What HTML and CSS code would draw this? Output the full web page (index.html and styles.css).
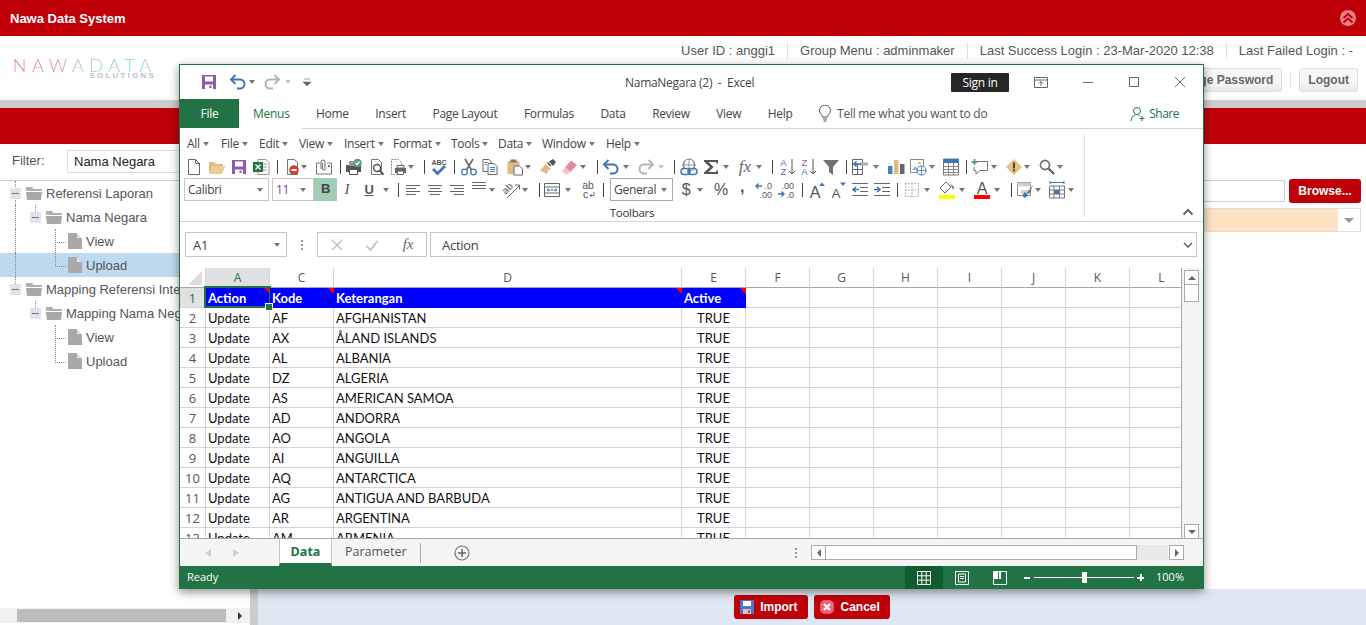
FILE: index.html
```html
<!DOCTYPE html>
<html lang="en">
<head>
  <meta charset="UTF-8" />
  <title>Nawa Data System</title>
  <link rel="stylesheet" href="styles.css">
</head>
<body>
  <!-- icon sprite for the spreadsheet ribbon -->
  <svg class="sprite" xmlns="http://www.w3.org/2000/svg">
    <symbol id="s-new" viewBox="0 0 18 18"><path d="M3.5 1.5h7l4 4v11h-11z" fill="#fff" stroke="#666"/><path d="M10.5 1.5v4h4" fill="none" stroke="#666"/></symbol>
    <symbol id="s-open" viewBox="0 0 18 18"><path d="M1 15V4h5l2 2h7v2H5l-3 7z" fill="#e2bb83"/><path d="M5 8h12.5L14 16H1.5z" fill="#eecb94"/></symbol>
    <symbol id="s-save" viewBox="0 0 18 18"><path d="M2 2h14v14H2z" fill="#8a5cad"/><path d="M5 3.5h8v5H5zM5 11.5h8V16H5z" fill="#fff"/><path d="M9.5 12.5h2V15h-2z" fill="#8a5cad"/></symbol>
    <symbol id="s-xls" viewBox="0 0 18 18"><path d="M6 1.5h8l3 3v12H6z" fill="#fff" stroke="#999"/><path d="M11 6h4M11 9h4M11 12h4" stroke="#999"/><path d="M1 4h10v10H1z" fill="#217346"/><path d="M3.5 6.5l5 5M8.5 6.5l-5 5" stroke="#fff" stroke-width="1.4"/></symbol>
    <symbol id="s-stop" viewBox="0 0 18 18"><path d="M3.5 1.5h7l3 3v12h-10z" fill="#fff" stroke="#777"/><circle cx="10" cy="12" r="4.8" fill="#c8442f"/><path d="M7.5 11h5v2h-5z" fill="#fff"/></symbol>
    <symbol id="s-clip" viewBox="0 0 18 18"><path d="M5 5H1.5v11h15V5H12" fill="none" stroke="#777"/><path d="M6 11V4a2 2 0 0 1 4 0v7a1.2 1.2 0 0 1-2.4 0V5" fill="none" stroke="#666"/><path d="M13 7h2v2h-2z" fill="#4a7ebb"/></symbol>
    <symbol id="s-printok" viewBox="0 0 18 18"><path d="M1 7h15v7H1z" fill="#555"/><path d="M4 3h7v5H4z" fill="#999"/><path d="M4.5 11.5h8v5h-8z" fill="#fff" stroke="#555"/><circle cx="12.5" cy="5" r="4.3" fill="#5a9f82"/><path d="M10.5 5l1.5 1.5 2.5-3" fill="none" stroke="#fff" stroke-width="1.2"/></symbol>
    <symbol id="s-preview" viewBox="0 0 18 18"><path d="M3.5 1.5h7l3 3v12h-10z" fill="#fff" stroke="#777"/><circle cx="9" cy="10" r="3.5" fill="#fff" stroke="#555" stroke-width="1.4"/><path d="M11.5 12.5l4 4" stroke="#555" stroke-width="2"/></symbol>
    <symbol id="s-printdoc" viewBox="0 0 18 18"><path d="M2.5 1.5h7l3 3v12h-10z" fill="#fff" stroke="#888" stroke-dasharray="2 1"/><path d="M6 10h11v5H6z" fill="#666"/><path d="M8 7.5h7V10H8z" fill="#fff" stroke="#666"/><path d="M8.5 13h6v3.5h-6z" fill="#fff" stroke="#666"/></symbol>
    <symbol id="s-cut" viewBox="0 0 18 18"><path d="M5 1l6.5 11M13 1L6.5 12" stroke="#666" stroke-width="1.6"/><circle cx="4.5" cy="14" r="2.8" fill="none" stroke="#3f76b4" stroke-width="1.3"/><circle cx="13.5" cy="14" r="2.8" fill="none" stroke="#3f76b4" stroke-width="1.3"/></symbol>
    <symbol id="s-copy" viewBox="0 0 18 18"><path d="M2 1.5h6l2 2v10H2z" fill="#fff" stroke="#666"/><path d="M7 5.5h6l3 3v8H7z" fill="#fff" stroke="#666"/><path d="M9 9.5h5M9 11.5h5M9 13.5h5M3.5 4.5h3M3.5 6.5h2" stroke="#4a7ebb"/></symbol>
    <symbol id="s-paste" viewBox="0 0 18 18"><path d="M1.5 3h12v13h-12z" fill="#e2bb83"/><path d="M4.5 1.5h6v3h-6z" fill="#777"/><path d="M8 8h5.5l3 3v6H8z" fill="#fff" stroke="#666"/></symbol>
    <symbol id="s-brush" viewBox="0 0 18 18"><path d="M1 12l6-6 5 5-3 1.5-1 3.5-3-1.5-2-1z" fill="#e2bb83"/><path d="M8 5l1-1 3.5 3.5-1 1z" fill="#444"/><path d="M10 3.5l4-2.5 3 3-3 4z" fill="#555"/></symbol>
    <symbol id="s-erase" viewBox="0 0 18 18"><path d="M10 2.5l6 4.5-6.5 7-5.5-4.5z" fill="#e58a9a"/><path d="M4 9.5L9.500 14l-2 2H4l-3-3z" fill="#f3c3cb"/></symbol>
    <symbol id="s-undo" viewBox="0 0 18 18"><path d="M6.5 2L2 6.5 6.5 11" fill="none" stroke="#3f76b4" stroke-width="2"/><path d="M2.5 6.5H11a4 4 0 0 1 0 9H8" fill="none" stroke="#3f76b4" stroke-width="2"/></symbol>
    <symbol id="s-redo" viewBox="0 0 18 18"><path d="M11.5 2L16 6.5 11.5 11" fill="none" stroke="#b5b5b5" stroke-width="2"/><path d="M15.5 6.5H7a4 4 0 0 0 0 9h3" fill="none" stroke="#b5b5b5" stroke-width="2"/></symbol>
    <symbol id="s-link" viewBox="0 0 18 18"><circle cx="9" cy="7" r="6" fill="none" stroke="#777"/><path d="M3 7h12M9 1v12M5 2.5c-1.5 3-1.5 6 0 9M13 2.5c1.5 3 1.5 6 0 9" fill="none" stroke="#777" stroke-width=".7"/><rect x="1" y="10.5" width="9" height="6" rx="3" fill="#fff" stroke="#3f76b4" stroke-width="1.5"/><rect x="8" y="10.5" width="9" height="6" rx="3" fill="none" stroke="#3f76b4" stroke-width="1.5"/></symbol>
    <symbol id="s-sigma" viewBox="0 0 18 18"><path d="M2 2h14v3.5h-1.5L14 4H6.500l5 5-5 5H14l.5-1.5H16V16H2v-1.500L8 9 2 3.500z" fill="#555"/></symbol>
    <symbol id="s-funnel" viewBox="0 0 18 18"><path d="M1 2h16l-6 7v8l-4-3V9z" fill="#707070"/></symbol>
    <symbol id="s-outline" viewBox="0 0 18 18"><path d="M1.5 1.5h10v15h-10zM1.5 6.5h10M1.5 11.5h10M6.500 6.5v10" fill="#fff" stroke="#666"/><path d="M9 4.500h8v3H9z" fill="#9ab3cf"/><path d="M10 6H3M5.500 3.500L3 6l2.500 2.500" fill="none" stroke="#3f76b4" stroke-width="1.6"/></symbol>
    <symbol id="s-bars" viewBox="0 0 18 18"><path d="M1 8h4.500v8H1z" fill="#4a7ebb"/><path d="M7 2h4.500v14H7z" fill="#e2bb83"/><path d="M13 6h4.500v10H13z" fill="#666"/></symbol>
    <symbol id="s-imgweb" viewBox="0 0 18 18"><path d="M1.5 1.5h13v13h-13z" fill="#fff" stroke="#888"/><circle cx="10.5" cy="5" r="1.5" fill="#e2bb83"/><path d="M3 12l3-4 3 4z" fill="#9ab3cf"/><circle cx="12.5" cy="12.5" r="4.5" fill="#fff" stroke="#3f76b4"/><path d="M8 12.5h9M12.5 8v9" stroke="#3f76b4" stroke-width=".8"/></symbol>
    <symbol id="s-table" viewBox="0 0 18 18"><path d="M1.5 1h15v16h-15z" fill="#fff" stroke="#777"/><path d="M1 1h16v4H1z" fill="#3f76b4"/><path d="M1.5 8.5h15M1.5 11.5h15M1.5 14.5h15M6.5 5v12M11.5 5v12" stroke="#888"/></symbol>
    <symbol id="s-comment" viewBox="0 0 18 18"><path d="M6 3.5h10.5v9H9L5 16v-3.500H3V9" fill="none" stroke="#777"/><path d="M3.5 1v6M.5 4h6" stroke="#5a9f82" stroke-width="1.8"/></symbol>
    <symbol id="s-warn" viewBox="0 0 18 18"><path d="M9 1l8 8-8 8-8-8z" fill="#e8c07f"/><path d="M8 4.5h2v6H8zM8 11.5h2v2H8z" fill="#444"/></symbol>
    <symbol id="s-search" viewBox="0 0 18 18"><circle cx="7" cy="7" r="4.5" fill="#fff" stroke="#777" stroke-width="1.8"/><path d="M10.5 10.5l5.5 5.5" stroke="#666" stroke-width="2.4"/></symbol>
    <symbol id="s-left" viewBox="0 0 18 18"><path d="M2 4.5h14M2 7.5h10M2 10.5h14M2 13.5h10" stroke="#666"/></symbol>
    <symbol id="s-center" viewBox="0 0 18 18"><path d="M2 4.5h14M4 7.5h10M2 10.5h14M4 13.5h10" stroke="#666"/></symbol>
    <symbol id="s-right" viewBox="0 0 18 18"><path d="M2 4.5h14M6 7.5h10M2 10.5h14M6 13.5h10" stroke="#666"/></symbol>
    <symbol id="s-top" viewBox="0 0 18 18"><path d="M2 1.5h14M2 4.5h14M2 7.5h14" stroke="#666"/></symbol>
    <symbol id="s-merge" viewBox="0 0 18 18"><path d="M1.5 2.5h15v13h-15zM1.5 6h15M1.5 12h15" fill="#fff" stroke="#666"/><path d="M4 9h10M5.5 7.5L4 9l1.5 1.5M12.5 7.5L14 9l-1.5 1.5" fill="none" stroke="#3f76b4"/></symbol>
    <symbol id="s-outd" viewBox="0 0 18 18"><path d="M1 2.5h16M9 6.5h8M9 10.5h8M1 14.5h16" stroke="#666"/><path d="M8 8.5H2M5 6L2 8.5 5 11" fill="none" stroke="#3f76b4" stroke-width="1.6"/></symbol>
    <symbol id="s-ind" viewBox="0 0 18 18"><path d="M1 2.5h16M9 6.5h8M9 10.5h8M1 14.5h16" stroke="#666"/><path d="M1 8.5h6M4 6l3 2.5L4 11" fill="none" stroke="#3f76b4" stroke-width="1.6"/></symbol>
    <symbol id="s-border" viewBox="0 0 18 18"><path d="M2.5 2.5h13v13h-13zM2.5 9h13M9 2.5v13" fill="none" stroke="#777" stroke-dasharray="1 2"/></symbol>
    <symbol id="s-fill" viewBox="0 0 18 18"><path d="M8 1L2 7l5 5 6-6z" fill="#fff" stroke="#666"/><path d="M12 3c2 1 4 2 4 4l-1 2-1-3z" fill="#3f76b4"/><path d="M1 14h16v4H1z" fill="#ffff00"/></symbol>
    <symbol id="s-fmt" viewBox="0 0 18 18"><path d="M1.5 1.5h13v13h-13z" fill="#fff" stroke="#888"/><path d="M1.5 1.5h13v4h-13z" fill="#d0d0d0"/><path d="M5 9h8v4H5z" fill="#c5d6e8"/><path d="M6 15l3-4 3 3-3 3z" fill="#3f76b4"/><path d="M11 12l6-8-4 9z" fill="#666"/></symbol>
    <symbol id="s-tblfmt" viewBox="0 0 18 18"><path d="M2 1.5h14M2 0v3M16 0v3" stroke="#3f76b4"/><path d="M1.5 5h15v12h-15zM1.5 9h15M1.5 13h15M6 5v12M11.5 5v12" fill="#fff" stroke="#777"/><path d="M6 9h5.5v4H6z" fill="#3f76b4"/></symbol>
    <symbol id="s-folder" viewBox="0 0 16 14"><path d="M0 1h6l1.5 2H16v2H0z" fill="#b0b0b0"/><path d="M0 6h16l-1 8H1z" fill="#a8a8a8"/></symbol>
    <symbol id="s-doc" viewBox="0 0 14 16"><path d="M0 0h8.5L14 5.500V16H0z" fill="#a9a9a9"/><path d="M9 .5V5h4.500z" fill="#e4e4e4"/></symbol>
  </svg>

  <header class="topbar">
    <span class="app-name">Nawa Data System</span>
    <span class="collapse-btn">
      <svg width="12" height="12" viewBox="0 0 12 12"><path d="M1.5 6L6 2l4.5 4M1.5 10.5L6 6.5l4.5 4" fill="none" stroke="#bf0008" stroke-width="2"/></svg>
    </span>
  </header>

  <div class="userbar">
    <div class="logo">
      <span class="logo-main">NAWADATA</span>
      <span class="logo-sub">SOLUTIONS</span>
    </div>
    <div class="user-side">
      <ul class="user-info">
        <li>User ID : anggi1</li>
        <li>Group Menu : adminmaker</li>
        <li>Last Success Login : 23-Mar-2020 12:38</li>
        <li>Last Failed Login : -</li>
      </ul>
      <div class="user-actions">
        <button class="grey-btn">Change Password</button>
        <span class="action-sep"></span>
        <button class="grey-btn logout">Logout</button>
      </div>
    </div>
  </div>
  <div class="grey-strip"></div>
  <div class="red-strip"></div>

  <main class="layout">
    <aside class="sidebar">
      <div class="filter">
        <label>Filter:</label>
        <input class="filter-input" type="text" value="Nama Negara">
      </div>
      <div class="tree">
        <div class="node trunk"><span class="tog"></span><svg class="folder"><use href="#s-folder"/></svg>Referensi Laporan</div>
        <div class="node trunk l2"><span class="tog"></span><svg class="folder"><use href="#s-folder"/></svg>Nama Negara</div>
        <div class="node trunk l3"><svg class="doc"><use href="#s-doc"/></svg>View</div>
        <div class="node trunk l3 last sel"><svg class="doc"><use href="#s-doc"/></svg>Upload</div>
        <div class="node trunk half"><span class="tog"></span><svg class="folder"><use href="#s-folder"/></svg>Mapping Referensi Internal</div>
        <div class="node l2"><span class="tog"></span><svg class="folder"><use href="#s-folder"/></svg>Mapping Nama Negara</div>
        <div class="node l3"><svg class="doc"><use href="#s-doc"/></svg>View</div>
        <div class="node l3 last"><svg class="doc"><use href="#s-doc"/></svg>Upload</div>
      </div>
      <div class="side-scroll">
        <i class="side-thumb"></i>
        <i class="side-arrow"></i>
      </div>
    </aside>
    <div class="splitter"></div>
    <section class="content">
      <div class="form-area">
        <div class="form-row">
          <input class="file-input" type="text">
          <button class="browse-btn">Browse...</button>
        </div>
        <div class="form-row">
          <div class="select-box"><span class="select-value"></span><span class="select-arrow"><i></i></span></div>
        </div>
      </div>
      <div class="footer-bar">
        <button class="red-btn">
          <svg width="16" height="16" viewBox="0 0 16 16"><path d="M1 1h14v14H1z" fill="#4a78c8"/><path d="M4 2h8v5H4z" fill="#fff"/><path d="M4 10h8v5H4z" fill="#f7b7c0"/><path d="M9 11h2v3H9z" fill="#4a78c8"/></svg>
          Import
        </button>
        <button class="red-btn">
          <svg width="16" height="16" viewBox="0 0 16 16"><rect x="1" y="1" width="14" height="14" rx="5" fill="#f1606f"/><path d="M5 5l6 6M11 5l-6 6" stroke="#fff" stroke-width="2.4"/></svg>
          Cancel
        </button>
      </div>
    </section>
  </main>

  <!-- spreadsheet window on top of the page -->
  <div class="xl-window">
    <div class="xl-title">
      <svg class="ic"><use href="#s-save"/></svg>
      <svg class="ic"><use href="#s-undo"/></svg>
      <i class="car"></i>
      <svg class="ic"><use href="#s-redo"/></svg>
      <i class="car pale"></i>
      <svg class="qat" width="8" height="9" viewBox="0 0 8 9"><path d="M1 1h6M0 4h8L4 8z" fill="#666" stroke="#666" stroke-width=".6"/></svg>
      <span class="doc-title">NamaNegara (2)  -  Excel</span>
      <span class="signin">Sign in</span>
      <svg class="ic"><path d="M2.5 4.5h13v10h-13zM2.5 7h13" fill="none" stroke="#666"/><path d="M9 13V8.500M7 10.500l2-2 2 2" fill="none" stroke="#666"/></svg>
      <svg class="ic"><path d="M4 9.5h10" stroke="#666"/></svg>
      <svg class="ic"><path d="M4.5 4.5h9v9h-9z" fill="none" stroke="#666"/></svg>
      <svg class="ic"><path d="M4 4l10 10M14 4L4 14" stroke="#777"/></svg>
    </div>

    <nav class="xl-tabs">
      <span class="tab-file">File</span>
      <span class="tab-menus">Menus</span>
      <div class="tabs-rest">
        <span>Home</span>
        <span>Insert</span>
        <span>Page Layout</span>
        <span>Formulas</span>
        <span>Data</span>
        <span>Review</span>
        <span>View</span>
        <span>Help</span>
        <span class="tell-me">
          <svg width="14" height="18" viewBox="0 0 14 18"><path d="M4.5 12c0-2-3-3.500-3-6.500a5.500 5.500 0 0 1 11 0c0 3-3 4.500-3 6.500zM5 14h4M5.500 16h3" fill="none" stroke="#555"/></svg>
          Tell me what you want to do
        </span>
        <span class="share">
          <svg width="16" height="16" viewBox="0 0 16 16"><circle cx="7" cy="5" r="3.5" fill="none" stroke="#217346"/><path d="M1 15c0-3 2-5 4-6M8.5 9.5c.5 0 1 .2 1.500.5M12 10v5M9.500 12.500h5" fill="none" stroke="#217346"/></svg>
          Share
        </span>
      </div>
    </nav>

    <div class="xl-ribbon">
      <div class="ribbon-main">
        <div class="menu-row">
          <span>All<i class="car"></i></span>
          <span>File<i class="car"></i></span>
          <span>Edit<i class="car"></i></span>
          <span>View<i class="car"></i></span>
          <span>Insert<i class="car"></i></span>
          <span>Format<i class="car"></i></span>
          <span>Tools<i class="car"></i></span>
          <span>Data<i class="car"></i></span>
          <span>Window<i class="car"></i></span>
          <span>Help<i class="car"></i></span>
        </div>
        <div class="icon-row">
          <svg class="ic"><use href="#s-new"/></svg>
          <svg class="ic"><use href="#s-open"/></svg>
          <svg class="ic"><use href="#s-save"/></svg>
          <svg class="ic"><use href="#s-xls"/></svg>
          <i class="sep"></i>
          <svg class="ic"><use href="#s-stop"/></svg>
          <i class="car"></i>
          <svg class="ic"><use href="#s-clip"/></svg>
          <i class="sep"></i>
          <svg class="ic"><use href="#s-printok"/></svg>
          <svg class="ic"><use href="#s-preview"/></svg>
          <svg class="ic"><use href="#s-printdoc"/></svg>
          <i class="car"></i>
          <i class="sep"></i>
          <svg class="ic" viewBox="0 0 18 18"><text x="9" y="6.5" font-size="7" font-weight="700" text-anchor="middle" font-family="Liberation Sans" fill="#555">ABC</text><path d="M3 11l4.5 4.5L15 8" fill="none" stroke="#3f76b4" stroke-width="2.8"/></svg>
          <i class="sep"></i>
          <svg class="ic"><use href="#s-cut"/></svg>
          <svg class="ic"><use href="#s-copy"/></svg>
          <svg class="ic"><use href="#s-paste"/></svg>
          <i class="car"></i>
          <svg class="ic"><use href="#s-brush"/></svg>
          <svg class="ic"><use href="#s-erase"/></svg>
          <i class="car"></i>
          <i class="sep"></i>
          <svg class="ic"><use href="#s-undo"/></svg>
          <i class="car"></i>
          <svg class="ic"><use href="#s-redo"/></svg>
          <i class="car pale"></i>
          <i class="sep"></i>
          <svg class="ic"><use href="#s-link"/></svg>
          <svg class="ic"><use href="#s-sigma"/></svg>
          <i class="car"></i>
          <svg class="ic" viewBox="0 0 18 18"><text x="9" y="14" font-size="17" font-style="italic" text-anchor="middle" font-family="Liberation Serif" fill="#666">fx</text></svg>
          <i class="car"></i>
          <i class="sep"></i>
          <svg class="ic" viewBox="0 0 18 18"><text x="5.5" y="8" font-size="9.5" text-anchor="middle" font-family="Liberation Sans" fill="#4a7ebb">A</text><text x="5.5" y="17" font-size="9.5" text-anchor="middle" font-family="Liberation Sans" fill="#8a5cad">Z</text><path d="M14 1v15M11 13l3 3 3-3" fill="none" stroke="#555"/></svg>
          <svg class="ic" viewBox="0 0 18 18"><text x="5.5" y="8" font-size="9.5" text-anchor="middle" font-family="Liberation Sans" fill="#8a5cad">Z</text><text x="5.5" y="17" font-size="9.5" text-anchor="middle" font-family="Liberation Sans" fill="#4a7ebb">A</text><path d="M14 1v15M11 13l3 3 3-3" fill="none" stroke="#555"/></svg>
          <svg class="ic"><use href="#s-funnel"/></svg>
          <i class="sep"></i>
          <svg class="ic"><use href="#s-outline"/></svg>
          <i class="car"></i>
          <svg class="ic"><use href="#s-bars"/></svg>
          <svg class="ic"><use href="#s-imgweb"/></svg>
          <i class="car"></i>
          <svg class="ic"><use href="#s-table"/></svg>
          <i class="sep"></i>
          <svg class="ic"><use href="#s-comment"/></svg>
          <i class="car"></i>
          <svg class="ic"><use href="#s-warn"/></svg>
          <i class="car"></i>
          <svg class="ic"><use href="#s-search"/></svg>
          <i class="car"></i>
        </div>
        <div class="format-row">
          <span class="combo font-combo">Calibri<i class="car"></i></span>
          <span class="combo size-combo">11<i class="car"></i></span>
          <span class="bold-btn">B</span>
          <span class="gl italic">I</span>
          <span class="gl under">U</span>
          <i class="car"></i>
          <i class="sep"></i>
          <svg class="ic"><use href="#s-left"/></svg>
          <svg class="ic"><use href="#s-center"/></svg>
          <svg class="ic"><use href="#s-right"/></svg>
          <svg class="ic"><use href="#s-top"/></svg>
          <i class="car"></i>
          <svg class="ic" viewBox="0 0 18 18"><text x="6" y="10" font-size="10" transform="rotate(-45 6 9)" text-anchor="middle" font-family="Liberation Sans" fill="#555">ab</text><path d="M4 17L16 5M12 4h4.5v4.5" fill="none" stroke="#666"/></svg>
          <i class="car"></i>
          <i class="sep"></i>
          <svg class="ic"><use href="#s-merge"/></svg>
          <i class="car"></i>
          <svg class="ic" viewBox="0 0 18 18"><text x="9" y="8" font-size="10.5" text-anchor="middle" font-family="Liberation Sans" fill="#555">ab</text><text x="4" y="17" font-size="10.5" font-family="Liberation Sans" fill="#555">c</text><path d="M15 11v3.5h-4M12.5 13L11 14.5l1.5 1.5" fill="none" stroke="#3f76b4"/></svg>
          <i class="sep"></i>
          <span class="combo general-combo">General<i class="car"></i></span>
          <span class="gl big">$</span>
          <i class="car"></i>
          <span class="gl big">%</span>
          <span class="gl big comma">,</span>
          <svg class="ic" viewBox="0 0 18 18"><text x="18" y="8" font-size="9" text-anchor="end" font-family="Liberation Sans" fill="#555">.0</text><text x="18" y="17" font-size="9" text-anchor="end" font-family="Liberation Sans" fill="#555">.00</text><path d="M8 5H2M4.5 2.5L2 5l2.5 2.500" fill="none" stroke="#3f76b4" stroke-width="1.4"/></svg>
          <svg class="ic" viewBox="0 0 18 18"><text x="18" y="8" font-size="9" text-anchor="end" font-family="Liberation Sans" fill="#555">.00</text><text x="18" y="17" font-size="9" text-anchor="end" font-family="Liberation Sans" fill="#555">.0</text><path d="M2 13h6M5.5 10.5L8 13l-2.500 2.500" fill="none" stroke="#3f76b4" stroke-width="1.4"/></svg>
          <i class="sep"></i>
          <svg class="ic" viewBox="0 0 18 18"><text x="7" y="17" font-size="16" text-anchor="middle" font-family="Liberation Sans" fill="#555">A</text><path d="M11 5l3-3.5L17 5z" fill="#3f76b4"/></svg>
          <svg class="ic" viewBox="0 0 18 18"><text x="7" y="17" font-size="13" text-anchor="middle" font-family="Liberation Sans" fill="#555">A</text><path d="M11 1.5h6L14 5z" fill="#3f76b4"/></svg>
          <svg class="ic"><use href="#s-outd"/></svg>
          <svg class="ic"><use href="#s-ind"/></svg>
          <i class="sep"></i>
          <svg class="ic"><use href="#s-border"/></svg>
          <i class="car"></i>
          <svg class="ic"><use href="#s-fill"/></svg>
          <i class="car"></i>
          <svg class="ic" viewBox="0 0 18 18"><text x="9" y="13" font-size="16" text-anchor="middle" font-family="Liberation Sans" fill="#555">A</text><path d="M1 14h16v4H1z" fill="#ff0000"/></svg>
          <i class="car"></i>
          <i class="sep"></i>
          <svg class="ic"><use href="#s-fmt"/></svg>
          <i class="car"></i>
          <svg class="ic"><use href="#s-tblfmt"/></svg>
          <i class="car"></i>
        </div>
        <div class="ribbon-label">Toolbars</div>
      </div>
      <div class="ribbon-end">
        <svg width="12" height="8" viewBox="0 0 12 8"><path d="M1.5 6.500L6 2l4.500 4.500" fill="none" stroke="#666" stroke-width="2"/></svg>
      </div>
    </div>

    <div class="xl-formula">
      <div class="name-box">A1<i class="car"></i></div>
      <span class="dots"></span>
      <div class="fx-box">
        <svg width="14" height="14" viewBox="0 0 14 14"><path d="M2 2l10 10M12 2L2 12" stroke="#c4c4c4" stroke-width="1.5"/></svg>
        <svg width="14" height="14" viewBox="0 0 14 14"><path d="M1.5 8l4 4 7-9" fill="none" stroke="#c4c4c4" stroke-width="2"/></svg>
        <svg width="16" height="16" viewBox="0 0 18 18"><text x="9" y="14" font-size="17" font-style="italic" text-anchor="middle" font-family="Liberation Serif" fill="#666">fx</text></svg>
      </div>
      <div class="formula-input">Action
        <svg width="10" height="6" viewBox="0 0 10 6"><path d="M1 1l4 4 4-4" fill="none" stroke="#555" stroke-width="1.3"/></svg>
      </div>
    </div>

    <div class="xl-sheet">
      <div class="grid-wrap">
        <table class="grid">
          <colgroup><col class="c-row"><col class="c-64"><col class="c-64"><col class="c-d"><col class="c-64"><col class="c-64"><col class="c-64"><col class="c-64"><col class="c-64"><col class="c-64"><col class="c-64"><col class="c-64"></colgroup>
          <tr class="head"><th class="corner"></th><th class="picked">A</th><th>C</th><th>D</th><th>E</th><th>F</th><th>G</th><th>H</th><th>I</th><th>J</th><th>K</th><th>L</th></tr>
          <tr class="title-row"><th class="picked">1</th><td class="current"><b>Action</b><i class="handle"></i></td><td class="note"><b>Kode</b></td><td class="note"><b>Keterangan</b></td><td class="note"><b>Active</b></td><td class="plain"></td><td class="plain"></td><td class="plain"></td><td class="plain"></td><td class="plain"></td><td class="plain"></td><td class="plain"></td></tr>
          <tr><th>2</th><td>Update</td><td>AF</td><td>AFGHANISTAN</td><td class="mid">TRUE</td><td></td><td></td><td></td><td></td><td></td><td></td><td></td></tr>
          <tr><th>3</th><td>Update</td><td>AX</td><td>ÅLAND ISLANDS</td><td class="mid">TRUE</td><td></td><td></td><td></td><td></td><td></td><td></td><td></td></tr>
          <tr><th>4</th><td>Update</td><td>AL</td><td>ALBANIA</td><td class="mid">TRUE</td><td></td><td></td><td></td><td></td><td></td><td></td><td></td></tr>
          <tr><th>5</th><td>Update</td><td>DZ</td><td>ALGERIA</td><td class="mid">TRUE</td><td></td><td></td><td></td><td></td><td></td><td></td><td></td></tr>
          <tr><th>6</th><td>Update</td><td>AS</td><td>AMERICAN SAMOA</td><td class="mid">TRUE</td><td></td><td></td><td></td><td></td><td></td><td></td><td></td></tr>
          <tr><th>7</th><td>Update</td><td>AD</td><td>ANDORRA</td><td class="mid">TRUE</td><td></td><td></td><td></td><td></td><td></td><td></td><td></td></tr>
          <tr><th>8</th><td>Update</td><td>AO</td><td>ANGOLA</td><td class="mid">TRUE</td><td></td><td></td><td></td><td></td><td></td><td></td><td></td></tr>
          <tr><th>9</th><td>Update</td><td>AI</td><td>ANGUILLA</td><td class="mid">TRUE</td><td></td><td></td><td></td><td></td><td></td><td></td><td></td></tr>
          <tr><th>10</th><td>Update</td><td>AQ</td><td>ANTARCTICA</td><td class="mid">TRUE</td><td></td><td></td><td></td><td></td><td></td><td></td><td></td></tr>
          <tr><th>11</th><td>Update</td><td>AG</td><td>ANTIGUA AND BARBUDA</td><td class="mid">TRUE</td><td></td><td></td><td></td><td></td><td></td><td></td><td></td></tr>
          <tr><th>12</th><td>Update</td><td>AR</td><td>ARGENTINA</td><td class="mid">TRUE</td><td></td><td></td><td></td><td></td><td></td><td></td><td></td></tr>
          <tr><th>13</th><td>Update</td><td>AM</td><td>ARMENIA</td><td class="mid">TRUE</td><td></td><td></td><td></td><td></td><td></td><td></td><td></td></tr>
        </table>
      </div>
      <div class="v-scroll">
        <span class="sb-btn"><i class="tri-up"></i></span>
        <span class="v-thumb"></span>
        <span class="sb-btn sb-down"><i class="tri-down"></i></span>
      </div>
    </div>

    <div class="xl-sheetbar">
      <i class="nav-left"></i>
      <i class="nav-right"></i>
      <span class="sheet-tab active">Data</span>
      <span class="sheet-tab">Parameter</span>
      <i class="tab-sep"></i>
      <svg class="add-sheet" width="16" height="16" viewBox="0 0 16 16"><circle cx="8" cy="8" r="7" fill="none" stroke="#777" stroke-width="1.2"/><path d="M8 4v8M4 8h8" stroke="#666" stroke-width="1.5"/></svg>
      <span class="dots bar-dots"></span>
      <div class="h-scroll">
        <span class="sb-btn"><i class="tri-left"></i></span>
        <span class="h-thumb"></span>
        <span class="h-track"></span>
        <span class="sb-btn"><i class="tri-right"></i></span>
      </div>
    </div>

    <footer class="xl-status">
      <span class="status-text">Ready</span>
      <div class="view-btns">
        <span class="view-btn on"><svg width="14" height="14" viewBox="0 0 14 14"><path d="M.5 .5h13v13H.5zM.5 4.800h13M.5 9.200h13M4.800 .5v13M9.200 .5v13" fill="none" stroke="#fff"/></svg></span>
        <span class="view-btn"><svg width="14" height="14" viewBox="0 0 14 14"><path d="M.5 .5h13v13H.5z" fill="none" stroke="#fff"/><path d="M3.5 3h7v8h-7zM5 5.500h4M5 7.500h4" fill="none" stroke="#fff"/></svg></span>
        <span class="view-btn"><svg width="14" height="14" viewBox="0 0 14 14"><path d="M.5 .5h13v13H.5z" fill="none" stroke="#fff"/><path d="M1 1h4v7H1zM6 1h2v7H6z" fill="#fff"/></svg></span>
      </div>
      <i class="zoom-minus"></i>
      <div class="zoom-track"><i class="zoom-thumb"></i></div>
      <i class="zoom-plus"></i>
      <span class="zoom-val status-text">100%</span>
    </footer>
  </div>
</body>
</html>
```

FILE: styles.css
```css
* { box-sizing: border-box; }
html, body { height: 100%; }
body {
  margin: 0;
  height: 625px;
  overflow: hidden;
  display: flex;
  flex-direction: column;
  font-family: "Liberation Sans", Arial, sans-serif;
  font-size: 13px;
  color: #555;
  background: #fff;
}
i { display: block; }
.sprite { position: absolute; width: 0; height: 0; }

/* page chrome */
.topbar {
  height: 36px;
  flex: none;
  background: #bf0008;
  color: #fff;
  display: flex;
  align-items: center;
  justify-content: space-between;
  padding: 0 10px;
}
.app-name { font-size: 13px; font-weight: bold; }
.collapse-btn {
  width: 16px;
  height: 16px;
  border-radius: 50%;
  background: #e58086;
  display: flex;
  align-items: center;
  justify-content: center;
}
.userbar {
  height: 64px;
  flex: none;
  display: flex;
  justify-content: space-between;
}
.logo {
  display: flex;
  flex-direction: column;
  align-items: flex-end;
  padding: 22px 0 0 13px;
  width: 154px;
}
.logo-main {
  font-family: Lato, sans-serif;
  font-weight: 300;
  font-size: 18px;
  line-height: 14px;
  letter-spacing: 5.6px;
  margin-right: -2.6px;
  white-space: nowrap;
  background: linear-gradient(90deg, #e8808f 0%, #e8808f 30%, #9ad8a4 52%, #7fc8dc 68%, #8ed4e0 100%);
  -webkit-background-clip: text;
  background-clip: text;
  color: transparent;
}
.logo-sub {
  font-size: 8px;
  line-height: 8px;
  font-weight: bold;
  letter-spacing: 2.2px;
  color: #b9bfc2;
  margin-right: -2px;
}
.user-side {
  display: flex;
  flex-direction: column;
  align-items: flex-end;
  padding-right: 8px;
}
.user-info {
  list-style: none;
  margin: 0;
  padding: 0 5px 2px 0;
  display: flex;
  height: 32px;
  align-items: center;
}
.user-info li {
  padding: 0 12px;
  line-height: 16px;
  border-left: 1px solid #ddd;
}
.user-info li:first-child { border-left: 0; }
.user-info li:last-child { padding-right: 0; }
.user-actions {
  display: flex;
  align-items: center;
  height: 24px;
}
.grey-btn {
  height: 24px;
  padding: 0 8px;
  font: bold 12px "Liberation Sans", Arial, sans-serif;
  color: #666;
  border: 1px solid #ddd;
  border-radius: 3px;
  background: linear-gradient(#f7f7f7, #f7f7f7 60%, #e8e8e8);
}
.action-sep {
  width: 1px;
  height: 14px;
  margin: 0 8px;
  background: #ddd;
}
.grey-strip { height: 8px; flex: none; background: #ccc; }
.red-strip { height: 36px; flex: none; background: #bf0008; }

.layout { flex: 1; display: flex; min-height: 0; }
.sidebar {
  width: 250px;
  flex: none;
  display: flex;
  flex-direction: column;
  overflow: hidden;
}
.filter {
  height: 37px;
  flex: none;
  display: flex;
  align-items: flex-start;
  padding: 6px 0 0 12px;
  border-bottom: 1px solid #ccc;
}
.filter label { width: 55px; line-height: 22px; }
.filter-input {
  width: 170px;
  height: 23px;
  padding: 0 6px;
  border: 1px solid #ddd;
  font: 13px "Liberation Sans", Arial, sans-serif;
  color: #222;
}
.tree { flex: 1; }
.node {
  position: relative;
  height: 24px;
  display: flex;
  align-items: center;
  padding-left: 10px;
  white-space: nowrap;
}
.node.sel { background: #bddaf0; }
.node.l2 { padding-left: 30px; }
.node.l3 { padding-left: 68px; }
.trunk::before {
  content: "";
  position: absolute;
  left: 15px;
  top: 0;
  bottom: 0;
  border-left: 1px dotted #888;
}
.trunk.half::before { bottom: 17px; }
.l2::after {
  content: "";
  position: absolute;
  left: 35px;
  top: 0;
  height: 7px;
  border-left: 1px dotted #888;
}
.l3::after {
  content: "";
  position: absolute;
  left: 55px;
  top: 0;
  width: 10px;
  height: 13px;
  border-left: 1px dotted #888;
  border-bottom: 1px dotted #888;
}
.l3.last::after { top: -11px; height: 24px; }
.tog {
  position: relative;
  z-index: 1;
  width: 11px;
  height: 11px;
  margin-right: 5px;
  background: linear-gradient(#778, #778) center/7px 1px no-repeat #dfe3ea;
}
.folder { width: 16px; height: 14px; margin-right: 4px; flex: none; }
.doc { width: 14px; height: 16px; margin-right: 4px; flex: none; }
.side-scroll {
  height: 15px;
  flex: none;
  margin-bottom: 2px;
  display: flex;
  align-items: center;
  padding-left: 17px;
  background: #f1f1f1;
}
.side-thumb { width: 209px; height: 13px; background: #bdbdbd; }
.side-arrow {
  margin-left: 12px;
  border-left: 4px solid #333;
  border-top: 4px solid transparent;
  border-bottom: 4px solid transparent;
}
.splitter { width: 8px; flex: none; background: #ccc; }
.content { flex: 1; display: flex; flex-direction: column; min-width: 0; }
.form-area { flex: 1; padding: 35px 5px 0 0; display: flex; flex-direction: column; gap: 5px; }
.form-row { display: flex; align-items: center; gap: 4px; }
.file-input { flex: 1; height: 22px; border: 1px solid #ccc; }
.browse-btn, .red-btn {
  border: 0;
  border-radius: 3px;
  background: #bf0008;
  color: #fff;
  font: bold 12px "Liberation Sans", Arial, sans-serif;
}
.browse-btn { width: 72px; height: 24px; }
.select-box {
  flex: 1;
  height: 24px;
  display: flex;
  border: 1px solid #ddd;
}
.select-value { flex: 1; background: #fde3c4; }
.select-arrow { width: 22px; display: flex; align-items: center; justify-content: center; }
.select-arrow i {
  border-top: 5px solid #999;
  border-left: 5px solid transparent;
  border-right: 5px solid transparent;
}
.footer-bar {
  height: 36px;
  flex: none;
  background: #dfe8f2;
  display: flex;
  align-items: center;
  justify-content: center;
  gap: 6px;
}
.red-btn {
  height: 24px;
  padding: 0 10px 0 5px;
  display: flex;
  align-items: center;
  gap: 5px;
}
.red-btn:first-child { padding-right: 11px; }

/* spreadsheet window */
.xl-window {
  position: absolute;
  left: 179px;
  top: 64px;
  width: 1025px;
  height: 525px;
  display: flex;
  flex-direction: column;
  background: #fff;
  border: 1px solid #217346;
  border-bottom: 0;
  box-shadow: 0 3px 9px rgba(0, 0, 0, .45);
  font-family: "Open Sans", sans-serif;
  font-size: 12px;
  letter-spacing: -.28px;
  color: #444;
}
.ic { width: 18px; height: 18px; display: block; overflow: visible; }
.ic text { letter-spacing: 0; }
.car {
  width: 0;
  height: 0;
  border-top: 4px solid #777;
  border-left: 3.5px solid transparent;
  border-right: 3.5px solid transparent;
}
.car.pale { border-top-color: #c4c4c4; }
.sep { width: 1px; height: 14px; background: #444; }

.xl-title {
  height: 34px;
  flex: none;
  display: grid;
  grid-template-columns: 29px 20px 14px 22px 18px 322px 326px 81px 47px 46px 46px auto;
  align-items: center;
  justify-items: start;
  padding-left: 20px;
}
.doc-title { white-space: pre; font-size: 12px; }
.signin {
  width: 58px;
  height: 19px;
  line-height: 19px;
  text-align: center;
  background: #262626;
  color: #fff;
  border-radius: 1px;
}
.xl-tabs { height: 30px; flex: none; display: flex; }
.tab-file {
  width: 59px;
  height: 29px;
  line-height: 29px;
  background: #217346;
  color: #fff;
  text-align: center;
}
.tab-menus { width: 63px; padding-left: 14px; line-height: 29px; color: #217346; }
.tabs-rest {
  flex: 1;
  display: flex;
  gap: 26.5px;
  padding-left: 14px;
  line-height: 29px;
  border-bottom: 1px solid #d2d2d2;
}
.tell-me { display: flex; align-items: center; gap: 5px; margin-left: -1px; color: #555; }
.share {
  margin-left: auto;
  padding-right: 24px;
  display: flex;
  align-items: center;
  gap: 3px;
  color: #217346;
  letter-spacing: -.5px;
}
.xl-ribbon {
  height: 93px;
  flex: none;
  display: flex;
  border-bottom: 1px solid #d2d2d2;
}
.ribbon-main { width: 904px; flex: none; }
.ribbon-end {
  flex: 1;
  margin: 4px 0 4px;
  border-left: 1px solid #e1e1e1;
  display: flex;
  justify-content: flex-end;
  align-items: flex-end;
  padding: 0 9px 1px 0;
}
.menu-row {
  margin: 4px 0 1px;
  height: 21px;
  padding-left: 7px;
  display: grid;
  grid-template-columns: 34px 38px 40px 45px 49px 58px 47px 44px 64px auto;
  align-items: center;
  justify-items: start;
}
.menu-row span { display: flex; align-items: center; gap: 3px; }
.icon-row {
  height: 23px;
  padding-left: 5px;
  display: grid;
  grid-template-columns: 23px 22px 22px 25px 7px 17px 14px 25px 5px 23px 21px 19px 16px 6px 24px 6px 21px 25px 19px 14px 22px 19px 17px 5px 21px 14px 21px 16px 6px 22px 21px 13px 20px 16px 6px 21px 23px 24px 5px 22px 14px 22px 20px 13px 24px 5px 20px 14px 19px 14px 19px auto;
  align-items: center;
  justify-items: start;
}
.format-row {
  height: 23px;
  padding-left: 4px;
  display: grid;
  grid-template-columns: 88px 42px 24px 22px 23px 15px 6px 22px 22px 22px 19px 14px 19px 17px 4px 22px 14px 24px 7px 67px 20px 15px 21px 21px 22px 26px 6px 21px 22px 22px 24px 6px 21px 14px 21px 14px 21px 17px 5px 19px 13px 20px auto;
  align-items: center;
  justify-items: start;
}
.combo {
  height: 23px;
  padding: 0 5px 0 3px;
  display: flex;
  align-items: center;
  justify-content: space-between;
  border: 1px solid #c6c6c6;
}
.font-combo { width: 85px; color: #444; }
.size-combo { width: 42px; color: #7b4a96; padding-right: 7px; }
.general-combo { width: 63px; border-color: #aaa; }
.bold-btn {
  width: 23px;
  height: 23px;
  text-align: center;
  background: #a0cdb3;
  font: bold 13px/22px "Liberation Sans", sans-serif;
  color: #444;
}
.gl { width: 18px; text-align: center; font: 13px "Liberation Sans", sans-serif; color: #555; }
.gl.italic { font-style: italic; font-family: "Liberation Serif", serif; font-size: 14px; }
.gl.under { text-decoration: underline; font-weight: bold; }
.gl.big { font-size: 16px; }
.gl.comma { font-weight: bold; margin-top: -6px; }
.ribbon-label { text-align: center; margin-top: 3px; line-height: 18px; font-size: 11.5px; color: #333; }

.xl-formula {
  height: 46px;
  flex: none;
  padding: 10px 6px 0 5px;
  display: flex;
  align-items: flex-start;
}
.name-box {
  width: 102px;
  height: 25px;
  padding: 0 6px 0 7px;
  display: flex;
  align-items: center;
  justify-content: space-between;
  border: 1px solid #c6c6c6;
  font-size: 13px;
  background: #fff;
}
.dots {
  width: 2px;
  height: 10px;
  margin: 8px 14px 0;
  background: repeating-linear-gradient(#999 0 2px, transparent 2px 4px);
}
.fx-box {
  width: 110px;
  height: 25px;
  padding: 0 10px 0 12px;
  margin-right: 3px;
  display: flex;
  align-items: center;
  justify-content: space-between;
  border: 1px solid #c6c6c6;
}
.formula-input {
  flex: 1;
  height: 25px;
  padding: 0 3px 0 11px;
  display: flex;
  align-items: center;
  justify-content: space-between;
  font-size: 13px;
  border: 1px solid #c6c6c6;
  background: #fdfdfd;
}
.xl-sheet { height: 270px; flex: none; display: flex; }
.grid-wrap { width: 1002px; flex: none; overflow: hidden; border-right: 1px solid #a8a8a8; }
.grid {
  table-layout: fixed;
  width: 1014px;
  border-collapse: separate;
  border-spacing: 0;
  font-family: Lato, sans-serif;
  font-size: 13px;
  letter-spacing: 0;
  color: #111;
}
.c-row { width: 26px; }
.c-64 { width: 64px; }
.c-d { width: 348px; }
.grid th, .grid td {
  height: 20px;
  padding: 1px 2px 0;
  border-right: 1px solid #d4d4d4;
  border-bottom: 1px solid #d4d4d4;
  white-space: nowrap;
  overflow: hidden;
  text-align: left;
  font-weight: normal;
  line-height: 18px;
}
.grid th {
  padding: 0;
  text-align: center;
  font-family: "Open Sans", sans-serif;
  font-size: 13px;
  color: #555;
}
.head th { border-bottom-color: #a8a8a8; font-size: 12px; }
.grid th.picked { background: #e1e1e1; color: #217346; }
.corner { position: relative; }
.corner::after {
  content: "";
  position: absolute;
  right: 3px;
  bottom: 2px;
  border-bottom: 14px solid #dcdcdc;
  border-left: 14px solid transparent;
}
.title-row td {
  background: #0000ff;
  color: #fff;
  border-color: #0000ff;
  position: relative;
  overflow: visible;
}
.title-row td.plain { background: #fff; border-color: #d4d4d4; }
.grid .note::after, .grid .current::before {
  content: "";
  position: absolute;
  right: -1px;
  top: 0;
  border-top: 6px solid #ff0000;
  border-left: 6px solid transparent;
}
.grid .current::after {
  content: "";
  position: absolute;
  left: -2px;
  top: -2px;
  right: -2px;
  bottom: -1px;
  border: 2px solid #217346;
}
.handle {
  position: absolute;
  right: -3px;
  bottom: -3px;
  width: 6px;
  height: 6px;
  background: #217346;
  outline: 1px solid #fff;
  z-index: 2;
}
.grid td.mid { text-align: center; }
.v-scroll {
  flex: 1;
  padding: 2px 3px 0 2px;
  background: #f3f3f3;
  display: flex;
  flex-direction: column;
}
.sb-btn {
  flex: none;
  width: 15px;
  height: 15px;
  display: flex;
  align-items: center;
  justify-content: center;
  background: #fff;
  border: 1px solid #ababab;
}
.v-thumb { width: 15px; height: 17px; background: #fff; border: 1px solid #ababab; border-top: 0; }
.sb-down { margin-top: auto; margin-bottom: -1px; }
.tri-up { border-bottom: 4px solid #666; border-left: 4px solid transparent; border-right: 4px solid transparent; }
.tri-down { border-top: 4px solid #666; border-left: 4px solid transparent; border-right: 4px solid transparent; }
.tri-left { border-right: 4px solid #666; border-top: 4px solid transparent; border-bottom: 4px solid transparent; }
.tri-right { border-left: 4px solid #666; border-top: 4px solid transparent; border-bottom: 4px solid transparent; }

.xl-sheetbar {
  height: 28px;
  flex: none;
  display: flex;
  align-items: center;
  background: #f5f5f5;
  border-top: 1px solid #a8a8a8;
}
.nav-left {
  margin-left: 25px;
  border-right: 6px solid #d0d0d0;
  border-top: 4px solid transparent;
  border-bottom: 4px solid transparent;
}
.nav-right {
  margin-left: 22px;
  border-left: 6px solid #d0d0d0;
  border-top: 4px solid transparent;
  border-bottom: 4px solid transparent;
}
.sheet-tab { height: 100%; line-height: 25px; padding: 0 13px; font-size: 12.5px; color: #555; letter-spacing: 0; }
.sheet-tab.active {
  width: 53px;
  margin-left: 40px;
  padding: 0;
  text-align: center;
  background: #fff;
  color: #217346;
  font-weight: bold;
  border-left: 1px solid #c6c6c6;
  border-right: 1px solid #c6c6c6;
  border-bottom: 3px solid #217346;
}
.tab-sep { width: 1px; height: 20px; background: #aaa; }
.add-sheet { margin-left: 33px; }
.bar-dots { margin: 0 14px 0 auto; }
.h-scroll { display: flex; align-items: center; margin-right: 19px; }
.h-thumb { width: 311px; height: 15px; background: #fff; border: 1px solid #ababab; border-left: 0; }
.h-track { width: 31px; height: 15px; background: #e9e9e9; margin-right: 1px; }
.xl-status {
  height: 23px;
  flex: none;
  display: flex;
  align-items: center;
  padding-left: 7px;
  background: #217346;
  color: #fff;
  font-size: 11px;
  letter-spacing: 0;
}
.status-text { margin-top: -2px; }
.view-btns { margin-left: auto; display: flex; height: 100%; }
.view-btn { width: 38px; display: flex; align-items: center; justify-content: center; }
.view-btn.on { background: #0f5c2f; }
.zoom-minus { width: 6px; height: 2px; margin-left: 5px; background: #fff; }
.zoom-track { width: 100px; height: 1px; margin: 0 3px 0 4px; background: #fff; display: flex; align-items: center; justify-content: center; }
.zoom-thumb { width: 5px; height: 11px; background: #fff; flex: none; }
.zoom-plus {
  width: 7px;
  height: 7px;
  background: linear-gradient(#fff, #fff) center/7px 2px no-repeat, linear-gradient(#fff, #fff) center/2px 7px no-repeat;
}
.zoom-val { margin: -2px 19px 0 12px; }
```
